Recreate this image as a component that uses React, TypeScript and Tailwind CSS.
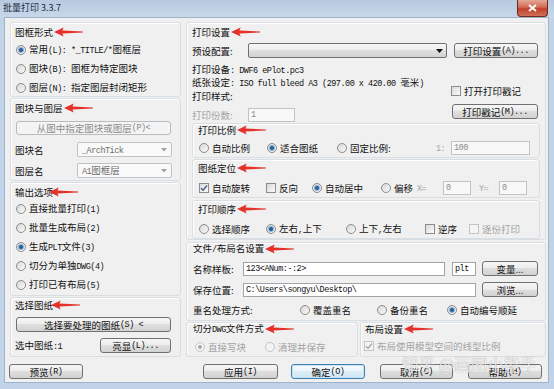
import React from "react";

type P = { children?: React.ReactNode; className?: string };

const M = ({ children }: P) => (
  <span className="font-['Liberation_Mono',monospace] text-[8.5px] tracking-[-0.5px]">{children}</span>
);

const Arrow = ({ className = "" }: { className?: string }) => (
  <svg width="29" height="10" viewBox="0 0 30 10" className={`shrink-0 ${className}`}>
    <path d="M0 5 L10 0.4 L8.8 3.5 L30 4.5 L30 5.5 L8.8 6.5 L10 9.6 Z" fill="#e4322b" />
  </svg>
);

const Label = ({ children, className = "", arrowClass = "ml-[1px]" }: P & { arrowClass?: string }) => (
  <div className={`flex items-center h-[12px] ${className}`}>
    <span className="whitespace-nowrap">{children}</span>
    <Arrow className={arrowClass} />
  </div>
);

const Radio = ({ checked = false, disabled = false }: { checked?: boolean; disabled?: boolean }) => (
  <span
    className={`inline-flex items-center justify-center w-[10px] h-[10px] rounded-full border shrink-0 ${
      disabled ? "border-[#c4c4c4] bg-[#f4f4f4]" : "border-[#8c8c8c] bg-[linear-gradient(135deg,#d6d6d6,#fbfbfb)]"
    }`}
  >
    {checked && (
      <span
        className={`w-[4px] h-[4px] rounded-full ${
          disabled ? "bg-[#a8a8a8]" : "bg-[#2c5d93] shadow-[0_0_0_1px_#86b5df]"
        }`}
      />
    )}
  </span>
);

const Check = ({ checked = false, disabled = false }: { checked?: boolean; disabled?: boolean }) => (
  <span
    className={`inline-flex items-center justify-center w-[10px] h-[10px] border shrink-0 ${
      disabled ? "border-[#c4c4c4] bg-[#f4f4f4]" : "border-[#8c8c8c] bg-[linear-gradient(135deg,#d9d9d9,#fbfbfb)]"
    }`}
  >
    {checked && (
      <svg width="8" height="8" viewBox="0 0 8 8">
        <path d="M1 4.2 L3.1 6.3 L7 1.5" fill="none" stroke={disabled ? "#a8a8a8" : "#4d6185"} strokeWidth="1.4" />
      </svg>
    )}
  </span>
);

const Opt = ({
  children,
  className = "",
  checked = false,
  disabled = false,
  box = false,
}: P & { checked?: boolean; disabled?: boolean; box?: boolean }) => (
  <div className={`flex items-center gap-[3px] h-[12px] shrink-0 whitespace-nowrap ${disabled ? "text-[#a3a3a3]" : ""} ${className}`}>
    {box ? <Check checked={checked} disabled={disabled} /> : <Radio checked={checked} disabled={disabled} />}
    <span>{children}</span>
  </div>
);

const Btn = ({ children, className = "", disabled = false, focus = false }: P & { disabled?: boolean; focus?: boolean }) => (
  <div
    className={`flex items-center justify-center rounded-[3px] border shrink-0 whitespace-nowrap ${
      disabled
        ? "border-[#b9bcbf] bg-[#f4f4f4] text-[#8a8a8a]"
        : focus
        ? "border-[#3c7fb1] bg-[linear-gradient(to_bottom,#f7fbfe,#eaf4fb_50%,#dcedf8_50%,#d0e6f5)] shadow-[inset_0_0_0_1px_#c8e3f6]"
        : "border-[#707070] bg-[linear-gradient(to_bottom,#f6f6f6,#ececec_50%,#dedede_50%,#d2d2d2)]"
    } ${className}`}
  >
    {children}
  </div>
);

const Input = ({ children, className = "", disabled = false }: P & { disabled?: boolean }) => (
  <div
    className={`flex items-center border px-[2px] shrink-0 whitespace-nowrap ${
      disabled ? "border-[#c3c3c3] bg-[#f8f8f8] text-[#8a8a8a]" : "border-[#a0a4ab] bg-white"
    } ${className}`}
  >
    {children}
  </div>
);

const Group = ({ children, className = "" }: P) => (
  <div className={`border border-[#d9dee2] rounded-[3px] shadow-[inset_1px_1px_0_#ffffff] flex flex-col shrink-0 ${className}`}>
    {children}
  </div>
);

const GrayCombo = ({ children }: P) => (
  <div className="w-[95px] h-[15px] rounded-[2px] border border-[#c2c2c2] bg-[#f9f9f9] flex items-center justify-between pl-[4px] pr-[4px] text-[#6d6d6d] shrink-0">
    <span>{children}</span>
    <svg width="6" height="4" viewBox="0 0 6 4">
      <path d="M0 0 L6 0 L3 3.5 Z" fill="#a0a0a0" />
    </svg>
  </div>
);

export default function App() {
  return (
    <div className="relative w-[554px] h-[389px] overflow-hidden bg-[#c1d3e8] font-['Noto_Sans_CJK_SC','Noto_Sans',sans-serif] text-[9.5px] leading-[12px] text-[#111111]">
      {/* title bar */}
      <div className="h-[18px] flex items-start justify-between bg-[linear-gradient(to_bottom,#b8cadf,#c8d8ea)]">
        <div className="pl-[3px] pt-[2px] text-[9px] leading-[12px] text-[#1b2b44]">批量打印 3.3.7</div>
        <div className="mr-[6px] w-[31px] h-[17px] rounded-b-[4px] border border-t-0 border-[#6d2a22] bg-[linear-gradient(to_bottom,#e5a898,#d06a55_45%,#c0412a_55%,#d0705a)] flex items-center justify-center">
          <svg width="9" height="8" viewBox="0 0 9 8">
            <path d="M1 1 L8 7 M8 1 L1 7" stroke="white" strokeWidth="1.8" />
          </svg>
        </div>
      </div>

      {/* body */}
      <div className="ml-[5px] w-[543px] h-[364px] bg-[#f0f0f0] flex flex-col shadow-[0_0_0_1px_#9fb3ca]">
        <div className="flex pt-[4px] pl-[5px] gap-[5px]">
          {/* left column */}
          <div className="w-[171px] flex flex-col gap-[1px]">
            <Group className="h-[75px]">
              <Label className="mt-[3px] ml-[4px]">图框形式</Label>
              <Opt checked className="mt-[6px] ml-[5px]">
                常用<M>(L): *_TITLE/*</M>图框层
              </Opt>
              <Opt className="mt-[7px] ml-[5px]">
                图块<M>(B): </M>图框为特定图块
              </Opt>
              <Opt className="mt-[7px] ml-[5px]">
                图层<M>(N): </M>指定图层封闭矩形
              </Opt>
            </Group>

            <Group className="h-[83px]">
              <Label className="mt-[3px] ml-[4px]">图块与图层</Label>
              <Btn disabled className="mt-[7px] ml-[5px] w-[155px] h-[14px]">
                从图中指定图块或图层<M>(P)&lt;</M>
              </Btn>
              <div className="mt-[7px] ml-[4px] flex items-center h-[15px]">
                <span className="w-[62px]">图块名</span>
                <GrayCombo>
                  <M>_ArchTick</M>
                </GrayCombo>
              </div>
              <div className="mt-[6px] ml-[4px] flex items-center h-[15px]">
                <span className="w-[62px]">图层名</span>
                <GrayCombo>
                  <M>A1</M>图框层
                </GrayCombo>
              </div>
            </Group>

            <Group className="h-[114px]">
              <Label className="mt-[3px] ml-[4px]" arrowClass="-ml-[4px]">
                输出选项
              </Label>
              <Opt className="mt-[5px] ml-[5px]">
                直接批量打印<M>(1)</M>
              </Opt>
              <Opt className="mt-[7px] ml-[5px]">
                批量生成布局<M>(2)</M>
              </Opt>
              <Opt checked className="mt-[7px] ml-[5px]">
                生成<M>PLT</M>文件<M>(3)</M>
              </Opt>
              <Opt className="mt-[7px] ml-[5px]">
                切分为单独<M>DWG(4)</M>
              </Opt>
              <Opt className="mt-[7px] ml-[5px]">
                打印已有布局<M>(5)</M>
              </Opt>
            </Group>

            <Group className="h-[60px]">
              <Label className="mt-[1px] ml-[4px]" arrowClass="-ml-[2px]">
                选择图纸
              </Label>
              <Btn className="mt-[6px] ml-[5px] w-[155px] h-[15px]">
                选择要处理的图纸<M>(S) &lt;</M>
              </Btn>
              <div className="mt-[6px] ml-[4px] flex items-center h-[15px]">
                <span className="w-[85px]">
                  选中图纸<M>:1</M>
                </span>
                <Btn className="w-[71px] h-[15px]">
                  亮显<M>(L)...</M>
                </Btn>
              </div>
            </Group>
          </div>

          {/* right column */}
          <div className="w-[360px] flex flex-col">
            <Group className="h-[218px]">
              <Label className="mt-[3px] ml-[5px]">打印设置</Label>
              <div className="mt-[5px] ml-[5px] flex items-center h-[15px]">
                <span className="w-[56px]">预设配置:</span>
                <div className="w-[199px] h-[15px] rounded-[2px] border border-[#707070] bg-[linear-gradient(to_bottom,#f6f6f6,#ececec_50%,#dedede_50%,#d2d2d2)] flex items-center justify-end pr-[3px] shrink-0">
                  <svg width="7" height="4" viewBox="0 0 7 4">
                    <path d="M0 0 L7 0 L3.5 4 Z" fill="#111" />
                  </svg>
                </div>
                <Btn className="ml-[7px] w-[84px] h-[15px]">
                  打印设置<M>(A)...</M>
                </Btn>
              </div>
              <div className="flex">
                <div className="w-[259px] ml-[5px] flex flex-col">
                  <div className="mt-[5px] h-[12px] whitespace-nowrap">
                    打印设备<M>: DWF6 ePlot.pc3</M>
                  </div>
                  <div className="mt-[1px] h-[12px] whitespace-nowrap">
                    纸张设定<M>: ISO full bleed A3 (297.00 x 420.00 </M>毫米<M>)</M>
                  </div>
                  <div className="mt-[2px] h-[12px] whitespace-nowrap">打印样式:</div>
                  <div className="mt-[6px] flex items-center h-[14px]">
                    <span className="w-[56px] text-[#a3a3a3]">打印份数:</span>
                    <Input disabled className="w-[47px] h-[14px]">
                      <M>1</M>
                    </Input>
                  </div>
                </div>
                <div className="flex flex-col">
                  <Opt box className="mt-[27px]">
                    打开打印戳记
                  </Opt>
                  <Btn className="mt-[7px] ml-[1px] w-[86px] h-[15px]">
                    打印戳记<M>(M)...</M>
                  </Btn>
                </div>
              </div>

              <Group className="mt-[1px] ml-[5px] w-[348px] h-[35px]">
                <Label className="ml-[5px]">打印比例</Label>
                <div className="mt-[5px] ml-[6px] flex items-center h-[14px]">
                  <Opt className="w-[68px]">自动比例</Opt>
                  <Opt checked className="w-[70px]">
                    适合图纸
                  </Opt>
                  <Opt className="w-[99px]">固定比例:</Opt>
                  <span className="w-[15px] text-[#a3a3a3]">
                    <M>1:</M>
                  </span>
                  <Input disabled className="w-[79px] h-[14px]">
                    <M>100</M>
                  </Input>
                </div>
              </Group>

              <Group className="mt-[1px] ml-[5px] w-[348px] h-[39px]">
                <Label className="mt-[2px] ml-[5px]">图纸定位</Label>
                <div className="mt-[7px] ml-[6px] flex items-center h-[14px]">
                  <Opt box checked className="w-[67px]">
                    自动旋转
                  </Opt>
                  <Opt box className="w-[46px]">
                    反向
                  </Opt>
                  <Opt checked className="w-[69px]">
                    自动居中
                  </Opt>
                  <Opt className="w-[36px]">偏移</Opt>
                  <span className="w-[26px] text-[#a3a3a3]">
                    <M>X=</M>
                  </span>
                  <Input disabled className="w-[28px] h-[14px]">
                    <M>0</M>
                  </Input>
                  <span className="w-[28px] pl-[8px] text-[#a3a3a3]">
                    <M>Y=</M>
                  </span>
                  <Input disabled className="w-[28px] h-[14px]">
                    <M>0</M>
                  </Input>
                </div>
              </Group>

              <Group className="mt-[2px] ml-[5px] w-[348px] h-[39px]">
                <Label className="mt-[2px] ml-[5px]">打印顺序</Label>
                <div className="mt-[8px] ml-[6px] flex items-center h-[12px]">
                  <Opt className="w-[67px]">选择顺序</Opt>
                  <Opt checked className="w-[80px]">
                    左右<M>,</M>上下
                  </Opt>
                  <Opt className="w-[79px]">
                    上下<M>,</M>左右
                  </Opt>
                  <Opt box className="w-[44px]">
                    逆序
                  </Opt>
                  <Opt box disabled>
                    逐份打印
                  </Opt>
                </div>
              </Group>
            </Group>

            <Group className="mt-[2px] h-[79px]">
              <Label className="ml-[6px]">
                文件<M>/</M>布局名设置
              </Label>
              <div className="mt-[6px] ml-[6px] flex items-center h-[15px]">
                <span className="w-[50px]">名称样板:</span>
                <Input className="w-[202px] h-[14px]">
                  <M>123&lt;ANum:-:2&gt;</M>
                </Input>
                <Input className="ml-[7px] w-[24px] h-[14px]">
                  <M>plt</M>
                </Input>
                <Btn className="ml-[6px] w-[56px] h-[15px]">变量...</Btn>
              </div>
              <div className="mt-[6px] ml-[6px] flex items-center h-[15px]">
                <span className="w-[50px]">保存位置:</span>
                <Input className="w-[233px] h-[14px]">
                  <M>C:\Users\songyu\Desktop\</M>
                </Input>
                <Btn className="ml-[6px] w-[56px] h-[15px]">浏览...</Btn>
              </div>
              <div className="mt-[7px] ml-[6px] flex items-center h-[12px]">
                <span className="w-[107px]">重名处理方式:</span>
                <Opt className="w-[77px]">覆盖重名</Opt>
                <Opt className="w-[70px]">备份重名</Opt>
                <Opt checked>自动编号顺延</Opt>
              </div>
            </Group>

            <div className="mt-[1px] flex gap-[2px] h-[35px]">
              <Group className="w-[172px] h-[35px]">
                <Label className="ml-[6px]">
                  切分<M>DWG</M>文件方式
                </Label>
                <div className="mt-[6px] ml-[8px] flex items-center h-[12px]">
                  <Opt checked disabled className="w-[70px]">
                    直接写块
                  </Opt>
                  <Opt disabled>清理并保存</Opt>
                </div>
              </Group>
              <Group className="w-[186px] h-[35px]">
                <Label className="ml-[4px]">布局设置</Label>
                <div className="mt-[5px] ml-[3px] flex">
                  <Opt box checked disabled>
                    布局使用模型空间的线型比例
                  </Opt>
                </div>
              </Group>
            </div>
          </div>
        </div>

        {/* bottom buttons */}
        <div className="mt-[7px] flex h-[15px]">
          <Btn className="ml-[4px] w-[74px] h-[15px]">
            预览<M>(R)</M>
          </Btn>
          <Btn className="ml-[120px] w-[75px] h-[15px]">
            应用<M>(I)</M>
          </Btn>
          <Btn focus className="ml-[13px] w-[74px] h-[15px]">
            确定<M>(O)</M>
          </Btn>
          <Btn className="ml-[15px] w-[73px] h-[15px]">
            取消<M>(C)</M>
          </Btn>
          <Btn className="ml-[15px] w-[74px] h-[15px]">
            帮助<M>(H)</M>
          </Btn>
        </div>
      </div>

      {/* watermark */}
      <div className="absolute left-[402px] top-[354px] text-[16.5px] leading-[20px] text-white/80 whitespace-nowrap [text-shadow:0_0_1px_rgba(0,0,0,0.4)]">
        知乎 @画图小能手
      </div>
    </div>
  );
}
